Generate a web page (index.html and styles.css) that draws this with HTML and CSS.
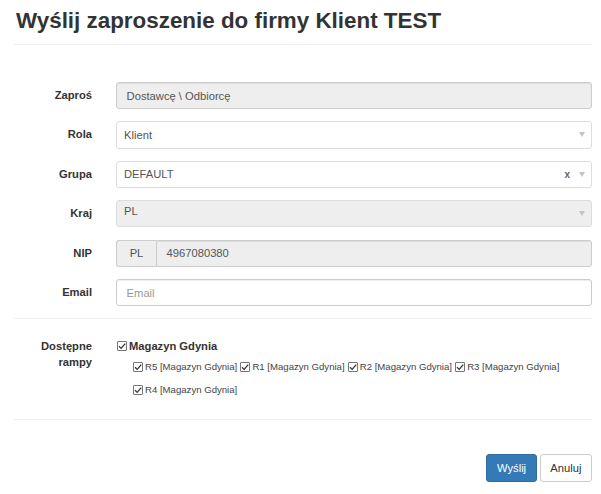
FILE: index.html
```html
<!DOCTYPE html>
<html lang="pl">
<head>
<meta charset="utf-8">
<link rel="stylesheet" href="styles.css">
</head>
<body>
<div class="page">
  <h3 class="title">Wyślij zaproszenie do firmy Klient TEST</h3>
  <div class="hr hr-top"></div>
  <div class="form">
    <div class="row">
      <div class="lbl">Zaproś</div>
      <div class="ctl"><div class="field disabled text">Dostawcę \ Odbiorcę</div></div>
    </div>
    <div class="row">
      <div class="lbl">Rola</div>
      <div class="ctl"><div class="field select"><span class="val">Klient</span><span class="arrow"></span></div></div>
    </div>
    <div class="row">
      <div class="lbl">Grupa</div>
      <div class="ctl"><div class="field select"><span class="val">DEFAULT</span><span class="clear">x</span><span class="arrow"></span></div></div>
    </div>
    <div class="row">
      <div class="lbl">Kraj</div>
      <div class="ctl"><div class="field select disabled top"><span class="val">PL</span><span class="arrow"></span></div></div>
    </div>
    <div class="row">
      <div class="lbl">NIP</div>
      <div class="ctl"><div class="group"><span class="addon">PL</span><div class="field disabled text grouped">4967080380</div></div></div>
    </div>
    <div class="row">
      <div class="lbl">Email</div>
      <div class="ctl"><div class="field text placeholder">Email</div></div>
    </div>
    <div class="hr hr-mid"></div>
    <div class="row rampy">
      <div class="lbl multi">Dostępne<br>rampy</div>
      <div class="ctl">
        <div class="wh"><span class="cb"><svg viewBox="0 0 10 10" width="10" height="10"><path d="M2 5.2 L4.2 7.4 L8.2 2.6" fill="none" stroke="#333" stroke-width="1.3"/></svg></span><b>Magazyn Gdynia</b></div>
        <div class="ramps">
          <span class="ramp"><span class="cb"><svg viewBox="0 0 10 10" width="10" height="10"><path d="M2 5.2 L4.2 7.4 L8.2 2.6" fill="none" stroke="#333" stroke-width="1.3"/></svg></span>R5 [Magazyn Gdynia]</span>
          <span class="ramp"><span class="cb"><svg viewBox="0 0 10 10" width="10" height="10"><path d="M2 5.2 L4.2 7.4 L8.2 2.6" fill="none" stroke="#333" stroke-width="1.3"/></svg></span>R1 [Magazyn Gdynia]</span>
          <span class="ramp"><span class="cb"><svg viewBox="0 0 10 10" width="10" height="10"><path d="M2 5.2 L4.2 7.4 L8.2 2.6" fill="none" stroke="#333" stroke-width="1.3"/></svg></span>R2 [Magazyn Gdynia]</span>
          <span class="ramp"><span class="cb"><svg viewBox="0 0 10 10" width="10" height="10"><path d="M2 5.2 L4.2 7.4 L8.2 2.6" fill="none" stroke="#333" stroke-width="1.3"/></svg></span>R3 [Magazyn Gdynia]</span>
          <span class="ramp"><span class="cb"><svg viewBox="0 0 10 10" width="10" height="10"><path d="M2 5.2 L4.2 7.4 L8.2 2.6" fill="none" stroke="#333" stroke-width="1.3"/></svg></span>R4 [Magazyn Gdynia]</span>
        </div>
      </div>
    </div>
    <div class="hr hr-bot"></div>
    <div class="actions">
      <button class="btn primary">Wyślij</button>
      <button class="btn">Anuluj</button>
    </div>
  </div>
</div>
</body>
</html>
```
FILE: styles.css
```css
html, body {
  margin: 0;
  padding: 0;
  background: #fff;
}
body {
  font-family: "Liberation Sans", Arial, sans-serif;
  font-size: 11.2px;
  color: #333;
}
.page {
  width: 578px;
  margin-left: 14px;
}
.title {
  margin: 0;
  padding: 8px 0 0 2px;
  font-size: 22.4px;
  line-height: 26px;
  font-weight: bold;
  color: #333;
}
.hr {
  height: 0;
  border-top: 1px solid #eee;
}
.hr-top {
  margin-top: 10px;
  margin-bottom: 37px;
}
.row {
  display: flex;
  margin-bottom: 12.2px;
}
.lbl {
  width: 78px;
  text-align: right;
  font-weight: bold;
  line-height: 27.2px;
  flex: none;
}
.ctl {
  margin-left: 24px;
  flex: 1;
  min-width: 0;
}
.field {
  box-sizing: border-box;
  height: 27.2px;
  border: 1px solid #ccc;
  border-radius: 3px;
  background: #fff;
  color: #555;
  display: flex;
  align-items: center;
  box-shadow: inset 0 1px 1px rgba(0,0,0,0.075);
}
.text {
  padding: 0 9.6px;
}
.select {
  padding: 0 5px 0 7px;
  box-shadow: none;
  border-color: #ddd;
}
.val {
  flex: 1;
}
.disabled {
  background: #eee;
}
.top {
  align-items: flex-start;
  padding-top: 4px;
}
.top .arrow {
  margin-top: 6px;
}
.arrow {
  width: 0;
  height: 0;
  border-left: 3.5px solid transparent;
  border-right: 3.5px solid transparent;
  border-top: 5px solid #c4c4c4;
  margin-right: 1px;
}
.clear {
  font-weight: bold;
  color: #666;
  font-size: 10px;
  margin-right: 9px;
}
.placeholder {
  color: #999;
}
.group {
  display: flex;
}
.addon {
  box-sizing: border-box;
  width: 40px;
  height: 27.2px;
  border: 1px solid #ccc;
  border-right: 0;
  border-radius: 3px 0 0 3px;
  background: #eee;
  color: #555;
  display: flex;
  align-items: center;
  justify-content: center;
}
.grouped {
  flex: 1;
  border-radius: 0 3px 3px 0;
}
.hr-mid {
  margin-top: 1px;
  margin-bottom: 16px;
}
.rampy {
  margin-bottom: 17px;
}
.lbl.multi {
  line-height: 16px;
  padding-top: 3px;
}
.wh {
  display: flex;
  align-items: center;
  height: 16px;
  margin-top: 3px;
  font-size: 11.2px;
}
.cb {
  box-sizing: border-box;
  width: 10px;
  height: 10px;
  border: 1px solid #767676;
  border-radius: 1px;
  background: #fff;
  display: inline-flex;
  flex: none;
  margin-right: 2px;
  position: relative;
}
.cb svg {
  position: absolute;
  left: -1px;
  top: -1px;
}
.wh .cb {
  margin-left: 1px;
}
.ramps {
  margin-left: 17px;
  margin-top: 2px;
  line-height: 22px;
}
.ramp {
  display: inline-flex;
  align-items: center;
  white-space: nowrap;
  color: #444;
  font-size: 9.6px;
}
.actions {
  display: flex;
  justify-content: flex-end;
  gap: 3px;
  margin-top: 34px;
}
.btn {
  box-sizing: border-box;
  height: 27.2px;
  padding: 0 9.6px;
  font-family: inherit;
  font-size: 11.2px;
  border: 1px solid #ccc;
  border-radius: 3px;
  background: #fff;
  color: #333;
}
.btn.primary {
  background: #337ab7;
  border-color: #2e6da4;
  color: #fff;
}
```
